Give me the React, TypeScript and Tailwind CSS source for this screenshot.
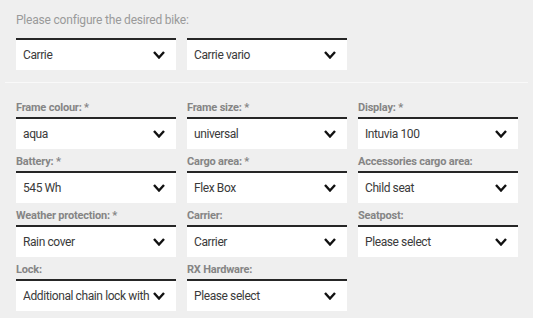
const topSelects = ["Carrie", "Carrie vario"]

const fields = [
    { label: "Frame colour: *", value: "aqua" },
    { label: "Frame size: *", value: "universal" },
    { label: "Display: *", value: "Intuvia 100" },
    { label: "Battery: *", value: "545 Wh" },
    { label: "Cargo area: *", value: "Flex Box" },
    { label: "Accessories cargo area:", value: "Child seat" },
    { label: "Weather protection: *", value: "Rain cover" },
    { label: "Carrier:", value: "Carrier" },
    { label: "Seatpost:", value: "Please select" },
    { label: "Lock:", value: "Additional chain lock with" },
    { label: "RX Hardware:", value: "Please select" },
]

function Chevron() {
    return (
        <svg width="12" height="8" viewBox="0 0 12 8" className="shrink-0">
            <polyline points="1,1 6,6.5 11,1" fill="none" stroke="#111" strokeWidth="2.4" strokeLinejoin="miter" />
        </svg>
    )
}

function Select({ value }: { value: string }) {
    return (
        <div className="flex h-[32px] w-[160px] items-center gap-[2px] border-t-2 border-[#262626] bg-white pl-[7px] pr-[11px]">
            <span className="flex-1 overflow-hidden whitespace-nowrap text-[12px] tracking-[-0.4px] text-[#3a3a3a]">
                {value}
            </span>
            <Chevron />
        </div>
    )
}

export default function App() {
    return (
        <div className="h-[318px] w-[533px] overflow-hidden bg-[#efefef] font-['Roboto',sans-serif]">
            <p className="px-[16px] pt-[12px] text-[12px] leading-[16px] tracking-[-0.2px] text-[#9a9a9a]">
                Please configure the desired bike:
            </p>

            <div className="mt-[10px] flex gap-[11px] px-[16px]">
                {topSelects.map((v) => (
                    <Select key={v} value={v} />
                ))}
            </div>

            <div className="mx-[5px] mt-[12px] h-px bg-[#f9f9f9]" />

            <div className="mt-[18px] grid grid-cols-[160px_160px_160px] gap-x-[11px] gap-y-[6px] px-[16px]">
                {fields.map((f) => (
                    <div key={f.label} className="flex flex-col">
                        <label className="mb-[2px] whitespace-nowrap text-[11px] font-bold leading-[14px] tracking-[-0.2px] text-[#858585]">
                            {f.label}
                        </label>
                        <Select value={f.value} />
                    </div>
                ))}
            </div>
        </div>
    )
}
